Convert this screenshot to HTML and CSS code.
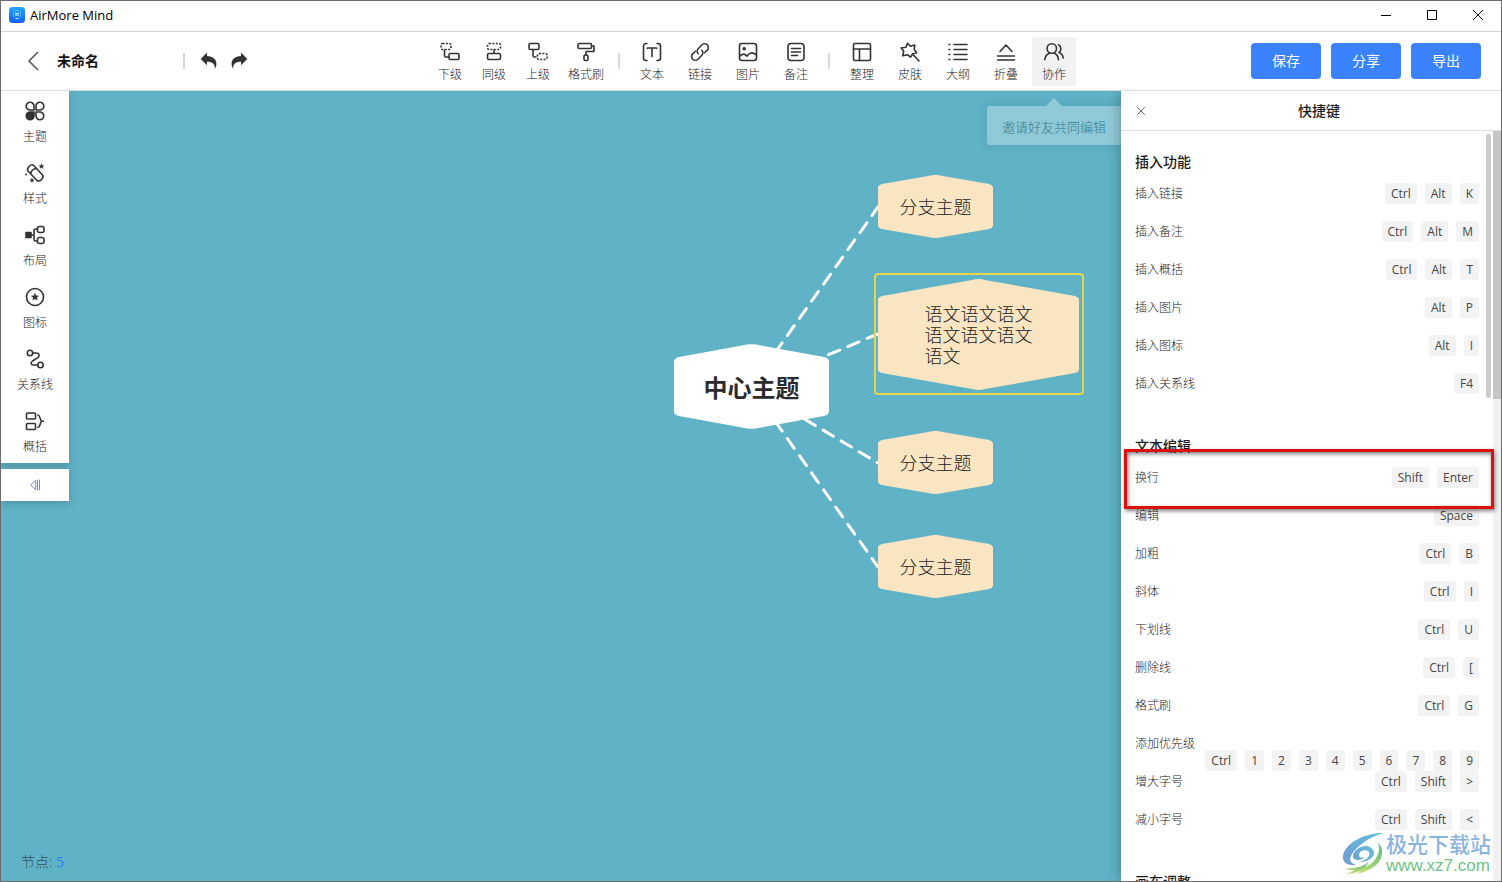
FILE: index.html
```html
<!DOCTYPE html>
<html lang="zh-CN">
<head>
<meta charset="utf-8">
<title>AirMore Mind</title>
<link rel="stylesheet" href="styles.css">
</head>
<body>
<div class="window">
  <header class="titlebar">
    <svg class="app-logo" viewBox="0 0 16 16">
      <defs><linearGradient id="logo" x1="0" y1="0" x2="0" y2="1"><stop offset="0" stop-color="#21a4ff"/><stop offset="1" stop-color="#1560f2"/></linearGradient></defs>
      <rect width="16" height="16" rx="3.5" fill="url(#logo)"/>
      <path d="M5.500 10.300A4 4 0 0 1 5 4.500M10.500 10.300A4 4 0 0 0 11 4.500M6.300 3.600a4 4 0 0 1 3.400 0" fill="none" stroke="#6cc8ff" stroke-width=".8"/>
      <path d="M6.300 6.500h3.400M6.500 8.200h3M7 11.500h2" fill="none" stroke="#c9f1ff" stroke-width="1"/>
    </svg>
    <span class="app-name">AirMore Mind</span>
    <div class="window-controls">
      <button aria-label="最小化"><svg viewBox="0 0 12 12"><path d="M1 6.500h10"/></svg></button>
      <button aria-label="最大化"><svg viewBox="0 0 12 12"><path d="M1.500 1.500h9v9h-9z"/></svg></button>
      <button aria-label="关闭"><svg viewBox="0 0 12 12"><path d="M1 1l10 10M11 1L1 11"/></svg></button>
    </div>
  </header>

  <nav class="toolbar">
    <div class="doc">
      <button class="back" aria-label="返回"><svg viewBox="0 0 12 20"><path d="M10.500 1.500L2 10l8.500 8.500"/></svg></button>
      <h1 class="doc-name">未命名</h1>
      <i class="divider"></i>
      <button class="history" aria-label="撤销"><svg viewBox="0 0 18 18"><path d="M7 .5v3.600c6 .2 9.700 3.600 9.400 8-.1 2-.8 3.500-1.600 4.600.3-4.600-2.400-7-7.800-6.900v3.500L.7 6.900z"/></svg></button>
      <button class="history" aria-label="重做"><svg viewBox="0 0 18 18"><path d="M11 .5v3.600c-6 .2-9.700 3.600-9.400 8 .1 2 .8 3.500 1.600 4.600-.3-4.600 2.400-7 7.800-6.900v3.500l6.300-6.400z"/></svg></button>
    </div>
    <div class="tools">
      <div class="tool-group">
        <button class="tool"><svg viewBox="0 0 20 20"><rect class="dashed" x="1" y="1.500" width="10" height="6" rx="1.500"/><path d="M4.500 8v5.500A1.500 1.500 0 0 0 6 15h3"/><rect x="9" y="11.500" width="10" height="6" rx="1.500"/></svg>下级</button>
        <button class="tool"><svg viewBox="0 0 20 20"><rect class="dashed" x="3.500" y="1.500" width="13" height="6" rx="1.500"/><path d="M10 8v3"/><rect x="3.500" y="11.500" width="13" height="6" rx="1.500"/></svg>同级</button>
        <button class="tool"><svg viewBox="0 0 20 20"><rect x="1" y="1.500" width="10" height="6" rx="1.500"/><path d="M5 8v5.500A1.500 1.500 0 0 0 6.500 15H8"/><rect class="dashed" x="9.500" y="11.500" width="9.500" height="6" rx="1.500"/></svg>上级</button>
      </div>
      <button class="tool"><svg viewBox="0 0 20 20"><rect x="2" y="1.500" width="13.500" height="5" rx="1.300"/><path d="M15.500 4H18v5.500h-8V13"/><rect x="8" y="13" width="4" height="5.500" rx="1.200"/></svg>格式刷</button>
      <i class="divider"></i>
      <button class="tool"><svg viewBox="0 0 20 20"><path d="M5 1.500H4A2.500 2.500 0 0 0 1.500 4v12A2.500 2.500 0 0 0 4 18.500h1M15 1.500h1A2.500 2.500 0 0 1 18.500 4v12a2.500 2.500 0 0 1-2.500 2.500h-1M5.500 6.500V6h9v.5M10 6v8.500"/></svg>文本</button>
      <button class="tool"><svg viewBox="0 0 20 20"><path d="M8.200 11.800a3.600 3.600 0 0 1 0-5.100l3.800-3.900a3.700 3.700 0 0 1 5.300 5.300l-2.600 2.600M11.800 8.200a3.600 3.600 0 0 1 0 5.100L8 17.200a3.700 3.700 0 0 1-5.300-5.300l2.600-2.600"/></svg>链接</button>
      <button class="tool"><svg viewBox="0 0 20 20"><rect x="1.500" y="1.500" width="17" height="17" rx="2.500"/><circle cx="6.200" cy="6.800" r="1" fill="#333"/><path d="M2 14c2.500-2.500 4.500-2.500 7 .2 2-3.700 5.500-4.500 9-1.500"/></svg>图片</button>
      <button class="tool"><svg viewBox="0 0 20 20"><rect x="2" y="1.500" width="16" height="17" rx="3"/><path d="M5.500 6.500h9M5.500 10h9M5.500 13.500h6"/></svg>备注</button>
      <i class="divider"></i>
      <button class="tool"><svg viewBox="0 0 20 20"><rect x="1.500" y="1.500" width="17" height="17" rx="1.500"/><path d="M1.500 7h17M7.500 7v11.500"/></svg>整理</button>
      <button class="tool"><svg viewBox="0 0 20 20"><path d="M7.500 1.300l3 3 4.300-1.200-.6 4.400 2.500 3.200-4 1-2 3.500-3-2.400-5 1 1-4.500L1.200 6l4.800-.7zM13 12.500l6 6.500"/></svg>皮肤</button>
      <button class="tool"><svg viewBox="0 0 20 20"><path d="M1 2.500h.8M1 7.500h.8M1 12.500h.8M1 17.500h.8M6 2.500h13M6 7.500h13M6 12.500h13M6 17.500h13"/></svg>大纲</button>
      <button class="tool"><svg viewBox="0 0 20 20"><path d="M4 9.500L10 3l6 6.500M1.500 14h17M1.500 18h17"/></svg>折叠</button>
      <button class="tool active"><svg viewBox="0 0 20 20"><circle cx="7.800" cy="6.500" r="4.700"/><path d="M.8 17.800c.2-3.500 2-5.600 4.500-6.600M14.500 17.800c-.2-3.500-1.800-5.600-4-6.600M14.500 2.800c2.800 1.500 3.300 5.700.5 7.700 2.500.8 3.900 2.500 4.200 5.500"/></svg>协作</button>
    </div>
    <div class="actions">
      <button class="primary">保存</button>
      <button class="primary">分享</button>
      <button class="primary">导出</button>
    </div>
  </nav>

  <main class="workspace">
    <section class="canvas">
      <svg class="links">
        <path d="M750 296L877 116M750 296L877 243M750 296L877 372M750 296L877 476"/>
      </svg>
      <div class="node root"><svg viewBox="0 0 155 85"><path d="M5 13Q0 14 0 18V67Q0 71 5 72L68 83.500Q77.500 86 87 83.500L150 72Q155 71 155 67V18Q155 14 150 13L87 1.500Q77.500-1 68 1.500Z"/></svg><span>中心主题</span></div>
      <div class="node branch first"><svg viewBox="0 0 115 63"><path d="M4 9Q0 10 0 13V50Q0 53 4 54L50 62Q57.500 64 65 62L111 54Q115 53 115 50V13Q115 10 111 9L65 1Q57.500-1 50 1Z"/></svg><span>分支主题</span></div>
      <div class="selection"></div>
      <div class="node branch second"><svg viewBox="0 0 201 111"><path d="M4 17Q0 18 0 21V90Q0 93 4 94L94 110Q100.500 112 107 110L197 94Q201 93 201 90V21Q201 18 197 17L107 1Q100.500-1 94 1Z"/></svg><span>语文语文语文<br>语文语文语文<br>语文</span></div>
      <div class="node branch third"><svg viewBox="0 0 115 63"><path d="M4 9Q0 10 0 13V50Q0 53 4 54L50 62Q57.500 64 65 62L111 54Q115 53 115 50V13Q115 10 111 9L65 1Q57.500-1 50 1Z"/></svg><span>分支主题</span></div>
      <div class="node branch fourth"><svg viewBox="0 0 115 63"><path d="M4 9Q0 10 0 13V50Q0 53 4 54L50 62Q57.500 64 65 62L111 54Q115 53 115 50V13Q115 10 111 9L65 1Q57.500-1 50 1Z"/></svg><span>分支主题</span></div>
      <div class="tooltip">邀请好友共同编辑</div>
      <p class="count">节点: <b>5</b></p>
      <div class="side">
        <div class="side-menu">
          <button><svg viewBox="0 0 20 20"><path d="M9 5.200V9H5.200A3.900 3.900 0 1 1 9 5.200zM11 5.200V9h3.800A3.900 3.900 0 1 0 11 5.200zM11 14.800V11h3.800a3.900 3.900 0 1 1-3.800 3.800z"/><path d="M9 14.800V11H5.200A3.900 3.900 0 1 0 9 14.800z" fill="#333"/></svg>主题</button>
          <button><svg viewBox="0 0 20 20"><path d="M8.500 2.300l9 9.700c2 2.500-2.500 7.500-5.500 5.500L3 8C1 5.500 6 .3 8.500 2.300zM5.700 10.800c.5-3 2.500-5 5.800-5.300"/><path d="M16.500 1l.7 1.400 1.500.2-1 1.100.2 1.600-1.400-.8-1.400.8.200-1.600-1-1.100 1.500-.2zM7 15.500l.6 1.100 1.200.2-.8.900.1 1.200-1.100-.5-1.100.5.100-1.200-.8-.9 1.200-.2z" fill="#333" stroke-width=".5"/><circle cx="1" cy="11.500" r=".6" fill="#333" stroke-width="1"/></svg>样式</button>
          <button><svg viewBox="0 0 20 20"><rect x="1" y="7.500" width="5" height="5" fill="#333"/><path d="M6 10h3M12 4h-1.500Q9 4 9 5.500v9Q9 16 10.500 16H12"/><rect x="12.500" y="1.500" width="6.500" height="6" rx="2"/><rect x="12.500" y="12.500" width="6.500" height="6" rx="2"/></svg>布局</button>
          <button><svg viewBox="0 0 20 20"><circle cx="10" cy="10" r="8.500"/><path d="M10 6.500l1 2.300 2.500.2-1.900 1.700.6 2.400-2.200-1.300-2.200 1.300.6-2.400L6.500 9 9 8.800z" fill="#333" stroke-width=".5"/></svg>图标</button>
          <button><svg viewBox="0 0 20 20"><circle cx="5" cy="4" r="2.700"/><circle cx="15.500" cy="16" r="2.700"/><path d="M7.700 4h3.300c3.500 0 4 3.200 1.500 4.800L7.500 12C5 14 6 16 8.500 16h4.200"/></svg>关系线</button>
          <button><svg viewBox="0 0 20 20"><rect x="1.500" y="2" width="9" height="6" rx="1"/><rect x="1.500" y="12.500" width="9" height="6" rx="1"/><path d="M13 4c2.500.5 1.800 5.500 3.800 6.200h1.700M13 16.500c2.500-.5 1.800-5.500 3.800-6.200"/></svg>概括</button>
        </div>
        <button class="collapse" aria-label="收起"><svg viewBox="0 0 12 12"><path d="M6.500 1.500L1.500 6l5 4.500zM8.500 1v10M10.500 1v10"/></svg></button>
      </div>
    </section>

    <aside class="panel">
      <header class="panel-head">
        <button class="close" aria-label="关闭面板"><svg viewBox="0 0 8 8"><path d="M.5.5l7 7M7.500.5l-7 7"/></svg></button>
        <h2>快捷键</h2>
      </header>
      <div class="panel-body">
        <div class="shortcuts">
          <section>
            <h3>插入功能</h3>
            <div class="row"><span>插入链接</span><div class="keys"><kbd>Ctrl</kbd><kbd>Alt</kbd><kbd>K</kbd></div></div>
            <div class="row"><span>插入备注</span><div class="keys"><kbd>Ctrl</kbd><kbd>Alt</kbd><kbd>M</kbd></div></div>
            <div class="row"><span>插入概括</span><div class="keys"><kbd>Ctrl</kbd><kbd>Alt</kbd><kbd>T</kbd></div></div>
            <div class="row"><span>插入图片</span><div class="keys"><kbd>Alt</kbd><kbd>P</kbd></div></div>
            <div class="row"><span>插入图标</span><div class="keys"><kbd>Alt</kbd><kbd>I</kbd></div></div>
            <div class="row"><span>插入关系线</span><div class="keys"><kbd>F4</kbd></div></div>
          </section>
          <section>
            <h3>文本编辑</h3>
            <div class="row"><span>换行</span><div class="keys"><kbd>Shift</kbd><kbd>Enter</kbd></div></div>
            <div class="row"><span>编辑</span><div class="keys"><kbd>Space</kbd></div></div>
            <div class="row"><span>加粗</span><div class="keys"><kbd>Ctrl</kbd><kbd>B</kbd></div></div>
            <div class="row"><span>斜体</span><div class="keys"><kbd>Ctrl</kbd><kbd>I</kbd></div></div>
            <div class="row"><span>下划线</span><div class="keys"><kbd>Ctrl</kbd><kbd>U</kbd></div></div>
            <div class="row"><span>删除线</span><div class="keys"><kbd>Ctrl</kbd><kbd>[</kbd></div></div>
            <div class="row"><span>格式刷</span><div class="keys"><kbd>Ctrl</kbd><kbd>G</kbd></div></div>
            <div class="row stacked"><span>添加优先级</span><div class="keys"><kbd>Ctrl</kbd><kbd>1</kbd><kbd>2</kbd><kbd>3</kbd><kbd>4</kbd><kbd>5</kbd><kbd>6</kbd><kbd>7</kbd><kbd>8</kbd><kbd>9</kbd></div></div>
            <div class="row"><span>增大字号</span><div class="keys"><kbd>Ctrl</kbd><kbd>Shift</kbd><kbd>&gt;</kbd></div></div>
            <div class="row"><span>减小字号</span><div class="keys"><kbd>Ctrl</kbd><kbd>Shift</kbd><kbd>&lt;</kbd></div></div>
          </section>
          <section>
            <h3>画布调整</h3>
          </section>
          <i class="inner-thumb"></i>
        </div>
        <div class="scrollbar"><i></i></div>
      </div>
      <div class="highlight"></div>
      <div class="watermark">
        <svg viewBox="0 0 44 42">
          <defs>
            <linearGradient id="wmBlue" x1="0" y1="1" x2="1" y2="0"><stop offset="0" stop-color="#6f9cd2"/><stop offset="1" stop-color="#62bfdc"/></linearGradient>
            <linearGradient id="wmGreen" x1="0" y1="1" x2="1" y2="0"><stop offset="0" stop-color="#d3e070"/><stop offset="1" stop-color="#5cbd80"/></linearGradient>
          </defs>
          <path d="M42 0C22 0 3 10 1 23c-1 7 6 10 13 9C8 30 7 26 10 21 15 13 27 4 42 0z" fill="url(#wmBlue)"/>
          <path d="M24 13c-8 0-14 7-13 11 1 4 8 4 12 0-3 1-6 1-6-2 0-4 6-6 9-4 4 3 0 9-9 11 9 0 16-5 15-10-1-3-4-6-8-6z" fill="url(#wmBlue)"/>
          <path d="M36 9c7 7 5 20-6 26-5 3-10 5-16 6 3-2 5-4 6-6 6-2 11-5 14-10s4-10 2-16z" fill="url(#wmGreen)"/>
          <path d="M3 35c9 1 17-1 24-6-5 8-13 12-24 12 4-1 7-2 9-4-3 0-6 0-9-2z" fill="url(#wmGreen)"/>
        </svg>
        <div class="wm-text"><span class="wm-name">极光下载站</span><span class="wm-url">www.xz7.com</span></div>
      </div>
    </aside>
  </main>
</div>
</body>
</html>
```

FILE: styles.css
```css
* { box-sizing: border-box; margin: 0; padding: 0; }

body {
  height: 100vh;
  overflow: hidden;
  background: #fff;
  color: #1c1c1c;
  font: 300 12px/16px "Open Sans", "Noto Sans CJK SC", sans-serif;
}

button { border: 0; background: none; color: inherit; font: inherit; cursor: pointer; }

svg { display: block; flex: none; fill: none; stroke: #333; stroke-width: 1.6; stroke-linecap: round; stroke-linejoin: round; overflow: visible; }

.window { display: flex; flex-direction: column; height: 100%; border: 1px solid #6c6a6c; }

/* title bar */
.titlebar { display: flex; align-items: center; gap: 5px; height: 31px; padding: 0 0 2px 8px; border-bottom: 1px solid #d3d3d3; }
.app-logo { width: 16px; height: 16px; stroke: none; }
.app-name { color: #000; font-size: 13px; font-weight: 400; }
.window-controls { display: flex; margin-left: auto; }
.window-controls button { display: grid; place-items: center; width: 46px; height: 28px; }
.window-controls svg { width: 12px; height: 12px; stroke: #000; stroke-width: 1; stroke-linecap: butt; }

/* toolbar */
.toolbar { display: grid; grid-template-columns: 1fr auto 1fr; align-items: center; height: 59px; border-bottom: 1px solid #d9dcdf; }
.doc { display: flex; align-items: center; padding-left: 26px; }
.back svg { width: 12px; height: 20px; stroke: #555; }
.doc-name { width: 126px; margin-left: 18px; color: #111; font-size: 14px; font-weight: 700; line-height: 20px; }
.divider { width: 2px; height: 16px; background: #d8d8d8; }
.history { margin-left: 15px; }
.history + .history { margin-left: 12px; }
.history svg { width: 18px; height: 18px; fill: #333; stroke: none; }
.tools { display: flex; align-items: center; gap: 4px; padding-left: 2px; }
.tools .divider { margin: 0 6px; }
.tool-group { display: flex; }
.tool { display: flex; flex-direction: column; align-items: center; gap: 5px; width: 44px; height: 49px; padding-top: 5px; border-radius: 2px; white-space: nowrap; }
.tool svg { width: 20px; height: 20px; }
.tool .dashed { stroke-dasharray: 2 1.4; stroke-linecap: butt; }
.tool.active { background: #f2f2f2; }
.actions { display: flex; justify-content: flex-end; gap: 10px; padding-right: 20px; }
.primary { width: 70px; height: 36px; border-radius: 4px; background: #3a82fe; color: #fff; font-size: 14px; font-weight: 400; }

/* workspace */
.workspace { display: flex; flex: 1; min-height: 0; }
.canvas { position: relative; flex: 1; overflow: hidden; background: #60b2c6; }
.links { position: absolute; inset: 0; width: 100%; height: 100%; stroke: #fff; stroke-width: 3; stroke-dasharray: 12 9; }
.node { position: absolute; display: grid; place-items: center; padding-top: 2px; }
.node svg { position: absolute; inset: 0; width: 100%; height: 100%; stroke: none; }
.node span { position: relative; }
.root { left: 673px; top: 253px; width: 155px; height: 85px; color: #2b2b2b; font-size: 24px; font-weight: 700; }
.root svg { fill: #fff; }
.branch { left: 877px; width: 115px; height: 63px; font-size: 18px; line-height: 21px; }
.branch svg { fill: #fae5c3; }
.first { top: 84px; }
.second { top: 188px; width: 201px; height: 111px; }
.third { top: 340px; }
.fourth { top: 444px; }
.selection { position: absolute; left: 873px; top: 182px; width: 210px; height: 122px; border: 2px solid #e6d44b; border-radius: 4px; }

.tooltip { position: absolute; right: 0; top: 15px; height: 39px; padding: 0 15px; border-radius: 3px 0 0 3px; background: #8fc8d6; color: #347f92; font-size: 13px; line-height: 42px; box-shadow: 0 0 12px rgba(0, 40, 60, .12); }
.tooltip::before { content: ""; position: absolute; left: 59px; top: -8px; border: 8px solid transparent; border-top: 0; border-bottom-color: #8fc8d6; }
.count { position: absolute; left: 20px; bottom: 9px; color: #34525a; font-size: 14px; line-height: 20px; }
.count b { color: #2f7cf2; font-weight: 400; }

.side { position: relative; display: flex; flex-direction: column; gap: 6px; width: 68px; }
.side-menu { display: flex; flex-direction: column; gap: 16px; height: 372px; padding-top: 10px; background: #fff; box-shadow: 0 2px 8px rgba(0, 0, 0, .2); }
.side-menu button { display: flex; flex-direction: column; align-items: center; gap: 8px; height: 46px; }
.side-menu svg { width: 20px; height: 20px; }
.collapse { display: grid; place-items: center; height: 32px; background: #fff; box-shadow: 0 2px 8px rgba(0, 0, 0, .2); }
.collapse svg { width: 12px; height: 12px; stroke: #7b83e8; stroke-width: 1; }

/* shortcut panel */
.panel { position: relative; display: flex; flex-direction: column; width: 380px; background: #fff; box-shadow: 0 0 12px rgba(0, 0, 0, .3); clip-path: inset(0 0 0 -14px); }
.panel-head { display: grid; grid-template-columns: 24px 1fr 16px; align-items: center; height: 40px; padding-left: 8px; border-bottom: 1px solid #dedede; }
.close { display: grid; place-items: center; height: 24px; }
.close svg { width: 8px; height: 8px; stroke: #666; stroke-width: 1; }
.panel-head h2 { font-size: 14px; font-weight: 500; text-align: center; line-height: 20px; }
.panel-body { display: flex; flex: 1; min-height: 0; }
.shortcuts { position: relative; display: flex; flex-direction: column; flex: 1; gap: 38px; padding: 17px 14px 0; overflow: hidden; }
.shortcuts section { display: flex; flex-direction: column; gap: 17px; }
.shortcuts h3 { margin-bottom: -10px; font-size: 14px; font-weight: 500; line-height: 28px; }
.row { display: flex; justify-content: space-between; height: 21px; line-height: 21px; }
.row.stacked { flex-direction: column; }
.row.stacked span { height: 17px; }
.keys { display: flex; justify-content: flex-end; gap: 8px; }
kbd { height: 21px; padding: 0 6px; border-radius: 3px; background: #f3f3f3; color: #444; font: 400 12px/21px "Open Sans", sans-serif; }
.inner-thumb { position: absolute; right: 2px; top: 3px; width: 5px; height: 264px; border-radius: 3px; background: #cdcdcd; }
.scrollbar { width: 8px; background: #f1f1f1; }
.scrollbar i { display: block; height: 268px; background: #c6c6c6; }
.highlight { position: absolute; left: 3px; right: 7px; top: 358px; height: 60px; border: 3px solid #dd1010; box-shadow: 1px 2px 4px rgba(0, 0, 0, .5), inset 1px 2px 4px rgba(0, 0, 0, .5); }

.watermark { position: absolute; right: 10px; bottom: 5px; display: flex; align-items: center; }
.watermark svg { width: 44px; height: 42px; stroke: none; }
.wm-text { display: flex; flex-direction: column; white-space: nowrap; }
.wm-name { color: #8ab3de; font-size: 21px; font-weight: 500; line-height: 24px; }
.wm-url { color: #6cc485; font: 400 17px/20px "Liberation Sans", sans-serif; }
```
